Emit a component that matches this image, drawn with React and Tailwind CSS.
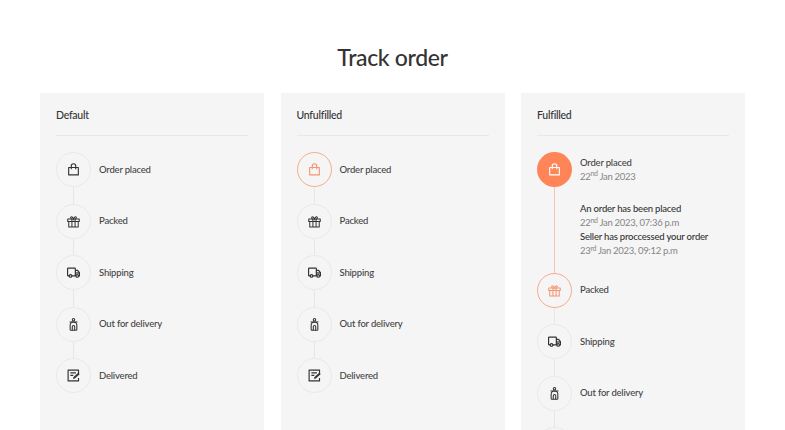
import React from "react";

const BagIcon = ({ className }) => (
  <svg viewBox="0 0 14 14" fill="none" stroke="currentColor" strokeWidth="1.2" className={className}>
    <path d="M1.800 4.800h10.400v8H1.800z" strokeLinejoin="round" />
    <path d="M4.600 6.800V3.200a2.400 2.400 0 0 1 4.800 0v3.600" />
  </svg>
);

const GiftIcon = ({ className }) => (
  <svg viewBox="0 0 14 14" fill="none" stroke="currentColor" strokeWidth="1.1" className={className}>
    <path d="M.8 4.400h12.400v2.600H.8zM1.900 7v5.800h10.200V7M5.300 4.400v8.400M8.700 4.400v8.400" strokeLinejoin="round" />
    <path d="M5.300 4.400C3.900 3.900 3.700 2.900 4.100 2.300c.6-.8 2.200-.3 2.900 2.100.7-2.400 2.300-2.900 2.900-2.100.4.600.2 1.600-1.200 2.100" />
  </svg>
);

const TruckIcon = ({ className }) => (
  <svg viewBox="0 0 14 14" fill="none" stroke="currentColor" strokeWidth="1.3" className={className}>
    <path d="M2.300 10.600H1.400a.8.8 0 0 1-.8-.8V3a.8.8 0 0 1 .8-.8h6.900a.7.7 0 0 1 .7.7v7.700H5.300" />
    <path d="M9 4.800h2.400l2 2.300v3.500h-.8" strokeLinejoin="round" />
    <path d="M9.600 7.500h3.600" />
    <circle cx="3.800" cy="10.700" r="1.400" />
    <circle cx="11" cy="10.700" r="1.400" />
  </svg>
);

const ScooterIcon = ({ className }) => (
  <svg viewBox="0 0 14 14" fill="none" stroke="currentColor" strokeWidth="1.15" className={className}>
    <circle cx="7" cy="1.900" r="1.300" />
    <path d="M3.600 4.300h6.800M2.800 4l.8.300M11.200 4l-.8.300" />
    <path d="M3.400 12.400V8a3.600 3.600 0 0 1 7.200 0v4.400a.8.8 0 0 1-.8.800H4.200a.8.8 0 0 1-.8-.8Z" />
    <path d="M5.700 13.200V9.300a1.300 1.300 0 0 1 2.600 0v3.900" />
  </svg>
);

const NoteIcon = ({ className }) => (
  <svg viewBox="0 0 14 14" fill="none" stroke="currentColor" strokeWidth="1.25" className={className}>
    <path d="M12.400 5.600V1.200H1.200v11.600h11.200V9.800" strokeLinejoin="round" />
    <path d="M3.600 4.200h6M3.600 6.800h3.200" />
    <path d="m6.800 10.400.4-1.800 4.900-4.300 1.200 1.300-4.800 4.300Z" fill="currentColor" strokeWidth="0.5" />
  </svg>
);

const steps = [
  { label: "Order placed", icon: BagIcon },
  { label: "Packed", icon: GiftIcon },
  { label: "Shipping", icon: TruckIcon },
  { label: "Out for delivery", icon: ScooterIcon },
  { label: "Delivered", icon: NoteIcon },
];

const font = "font-['Lato','Liberation_Sans',sans-serif]";

// circle with the step's icon, variant decides the colours
const StepCircle = ({ icon: Icon, variant }) => {
  let circleClass = "border border-[#e9e9e9] text-[#333333]";
  if (variant === "active") circleClass = "border border-[#f9a98c] text-[#f59574]";
  if (variant === "done") circleClass = "bg-[#ff8559] text-white";

  return (
    <div className={`w-[35px] h-[35px] shrink-0 rounded-full flex items-center justify-center ${circleClass}`}>
      <Icon className="w-[13px] h-[13px]" />
    </div>
  );
};

const Connector = ({ done, tall }) => (
  <div className={`w-[35px] flex justify-center shrink-0 ${tall ? "" : "h-[16.5px]"}`}>
    <div className={`w-px ${tall ? "" : "h-full"} ${done ? "bg-[#f8c4b0]" : "bg-[#e6e6e6]"}`} />
  </div>
);

const Step = ({ label, icon, variant }) => (
  <div className="flex items-center gap-[8px]">
    <StepCircle icon={icon} variant={variant} />
    <span className="text-[9.5px] leading-[14px] font-medium text-[#444444] tracking-[-0.2px]">{label}</span>
  </div>
);

const Card = ({ title, children }) => (
  <div className="bg-[#f5f5f5] px-[16px] pt-[14px] h-[337px] overflow-hidden">
    <div className="text-[10.5px] leading-[16px] font-medium text-[#333333] tracking-[-0.25px] pb-[12px] border-b border-[#e8e8e8] mb-[16px]">{title}</div>
    {children}
  </div>
);

const Ordinal = ({ day, suffix, rest }) => (
  <>
    {day}
    <sup className="text-[7px]">{suffix}</sup> {rest}
  </>
);

const StepList = ({ activeIndex }) => (
  <div className="flex flex-col">
    {steps.map((step, i) => (
      <React.Fragment key={step.label}>
        <Step label={step.label} icon={step.icon} variant={i === activeIndex ? "active" : "default"} />
        {i < steps.length - 1 && <Connector />}
      </React.Fragment>
    ))}
  </div>
);

const updates = [
  { title: "An order has been placed", day: "22", suffix: "nd", rest: "Jan 2023, 07:36 p.m" },
  { title: "Seller has proccessed your order", day: "23", suffix: "rd", rest: "Jan 2023, 09:12 p.m" },
];

const App = () => {
  return (
    <div className={`h-[430px] overflow-hidden bg-white px-[40px] ${font}`}>
      <h1 className="h-[93px] pt-[39px] text-center text-[23px] leading-[36px] tracking-[-0.35px] font-medium text-[#333333]">Track order</h1>

      <div className="grid grid-cols-3 gap-[16.5px]">
        <Card title="Default">
          <StepList activeIndex={-1} />
        </Card>

        <Card title="Unfulfilled">
          <StepList activeIndex={0} />
        </Card>

        <Card title="Fulfilled">
          <div className="flex flex-col">
            <div className="flex items-center gap-[8px]">
              <StepCircle icon={BagIcon} variant="done" />
              <div className="text-[9.5px] leading-[14px] text-[#444444] tracking-[-0.2px]">
                <div className="font-medium">Order placed</div>
                <div className="text-[#858585] tracking-[-0.3px]">
                  <Ordinal day="22" suffix="nd" rest="Jan 2023" />
                </div>
              </div>
            </div>

            <div className="flex items-stretch gap-[8px] h-[85.5px]">
              <Connector done tall />
              <div className="pt-[15px] text-[9.5px] leading-[14px] tracking-[-0.2px]">
                {updates.map((u) => (
                  <div key={u.title}>
                    <div className="font-medium text-[#333333]">{u.title}</div>
                    <div className="text-[#858585] tracking-[-0.3px]">
                      <Ordinal day={u.day} suffix={u.suffix} rest={u.rest} />
                    </div>
                  </div>
                ))}
              </div>
            </div>

            <Step label="Packed" icon={GiftIcon} variant="active" />
            <Connector />
            <Step label="Shipping" icon={TruckIcon} />
            <Connector />
            <Step label="Out for delivery" icon={ScooterIcon} />
            <Connector />
            <Step label="Delivered" icon={NoteIcon} />
          </div>
        </Card>
      </div>
    </div>
  );
};

export default App;
